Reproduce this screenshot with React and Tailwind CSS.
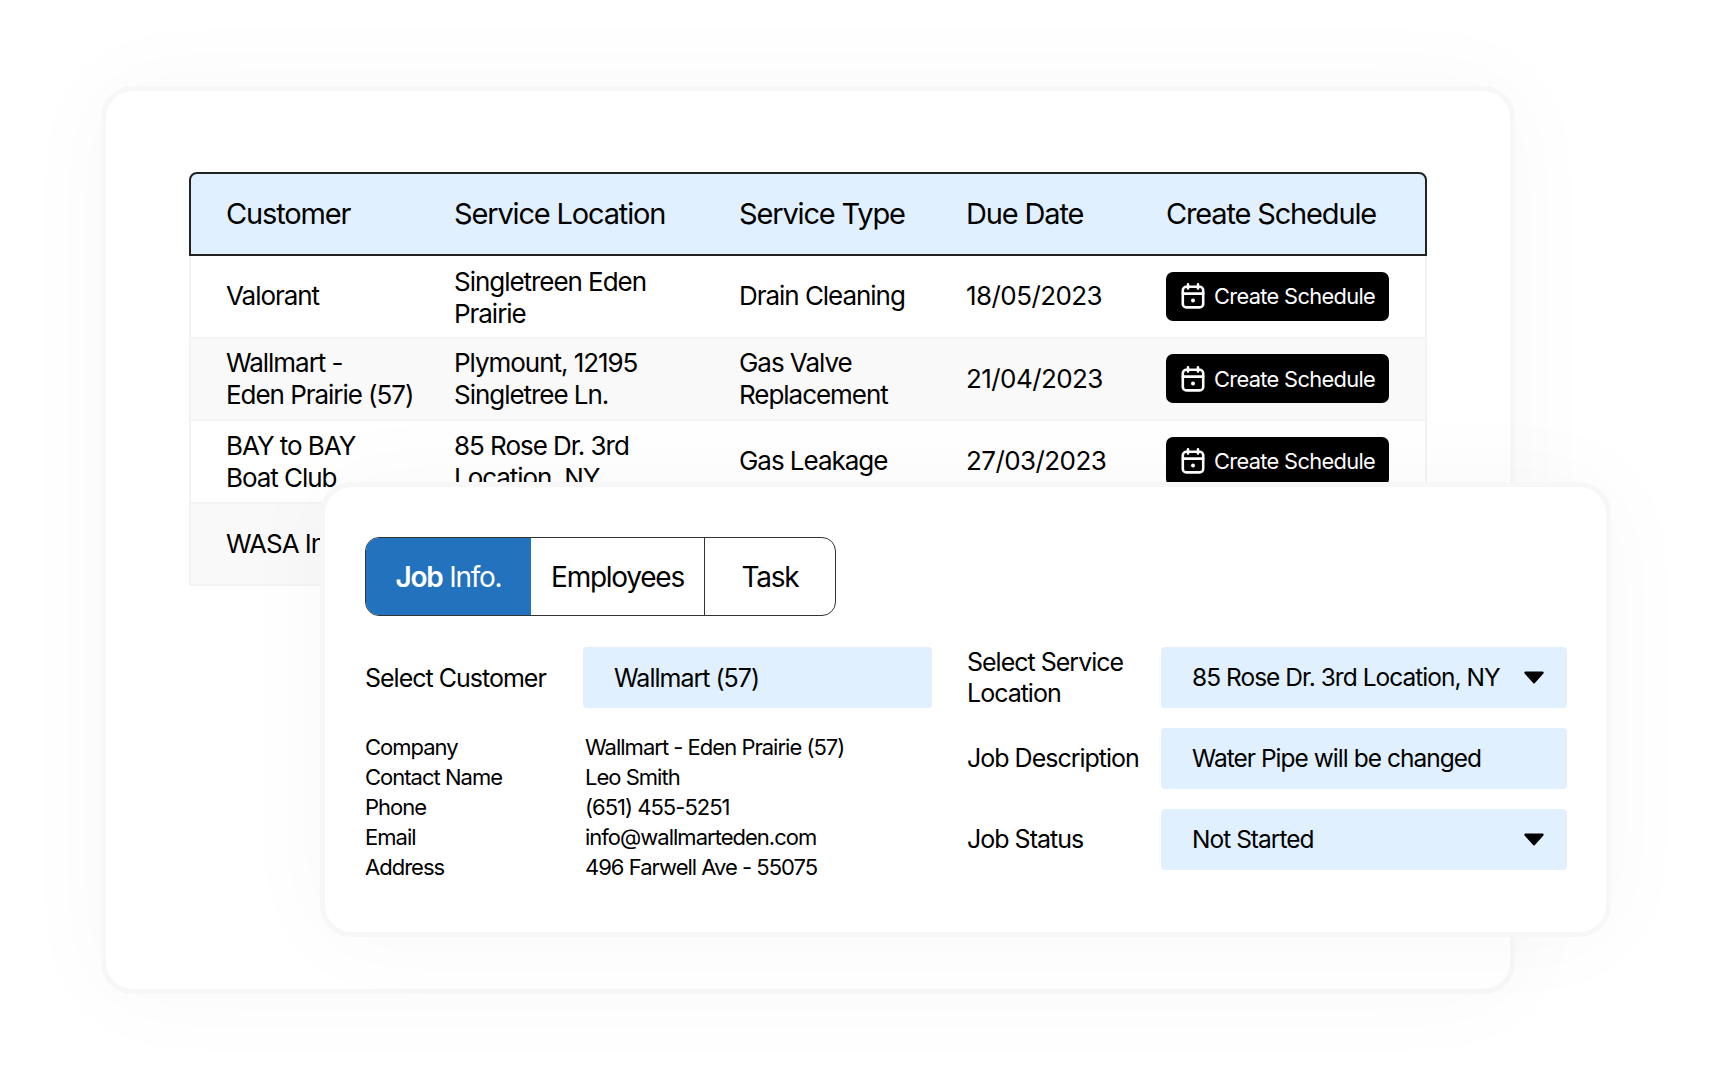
const rows = [
  { customer: ["Valorant"], location: ["Singletreen Eden", "Prairie"], type: ["Drain Cleaning"], due: "18/05/2023", shade: false, locationClass: "pt-[4px]" },
  { customer: ["Wallmart -", "Eden Prairie (57)"], location: ["Plymount, 12195", "Singletree Ln."], type: ["Gas Valve", "Replacement"], due: "21/04/2023", shade: true },
  { customer: ["BAY to BAY", "Boat Club"], location: ["85 Rose Dr. 3rd", "Location, NY"], type: ["Gas Leakage"], due: "27/03/2023", shade: false, customerClass: "pt-[2px]", locationClass: "pt-[2px]" },
  { customer: ["WASA Inc."], location: [], type: [], due: "", shade: true, noButton: true },
];

const details = [
  ["Company", "Wallmart - Eden Prairie (57)"],
  ["Contact Name", "Leo Smith"],
  ["Phone", "(651) 455-5251"],
  ["Email", "info@wallmarteden.com"],
  ["Address", "496 Farwell Ave - 55075"],
];

const CalendarIcon = () => (
  <svg width="24" height="26" viewBox="0 0 24 26" fill="none" stroke="white" strokeWidth="2.6" strokeLinecap="round">
    <rect x="1.8" y="3.8" width="20.4" height="20.6" rx="3.5" />
    <path d="M1.8 10.6h20.4M7 1.4v4M17 1.4v4" />
    <circle cx="12" cy="17.4" r="2" fill="white" stroke="none" />
  </svg>
);

const Caret = () => (
  <svg width="20" height="13" viewBox="0 0 20 13">
    <path d="M1.5 0.5h17a1.2 1.2 0 0 1 .9 2l-8.5 9.6a1.2 1.2 0 0 1-1.8 0L.6 2.5a1.2 1.2 0 0 1 .9-2z" fill="black" />
  </svg>
);

const Lines = ({ items, className = "" }) => (
  <div className={`flex flex-col ${className}`}>
    {items.map((t) => (
      <span key={t}>{t}</span>
    ))}
  </div>
);

const Field = ({ label, value, caret }) => (
  <div className="flex h-[61px] items-center">
    <div className="w-[194px] text-[25px] leading-[31px] tracking-[-0.04em]">{label}</div>
    <div className="flex h-[61px] w-[406px] items-center justify-between rounded-[4px] bg-[#e1f0ff] pl-[31px] pr-[23px] text-[24.5px] tracking-[-0.04em]">
      <span>{value}</span>
      {caret && <Caret />}
    </div>
  </div>
);

const App = () => {
  return (
    <div className="relative h-[1081px] w-[1712px] overflow-hidden bg-white font-['Inter',sans-serif] text-black">
      <div className="absolute left-[101px] top-[86px] h-[908px] w-[1414px] rounded-[32px] border-[5px] border-[#f7f7f7] bg-white pl-[83px] pt-[81px] shadow-[0_0_100px_rgba(0,0,0,0.03)]">
        <div className="w-[1238px]">
          <div className="grid h-[84px] grid-cols-[228px_285px_227px_200px_1fr] items-center rounded-t-[8px] border-2 border-[#222] bg-[#e1f0ff] pl-[35px] text-[29px] tracking-[-0.04em]">
            <div>Customer</div>
            <div>Service Location</div>
            <div>Service Type</div>
            <div>Due Date</div>
            <div>Create Schedule</div>
          </div>
          {rows.map((row) => (
            <div
              key={row.customer[0]}
              className={`grid h-[82.5px] grid-cols-[228px_285px_227px_200px_1fr] items-center border-x-2 border-b-2 border-[#f3f3f3] pl-[35px] text-[26px] leading-[32px] tracking-[-0.04em] ${row.shade ? "bg-[#f9f9f9]" : "bg-white"}`}
            >
              <Lines items={row.customer} className={row.customerClass} />
              <Lines items={row.location} className={row.locationClass} />
              <Lines items={row.type} />
              <div className="tracking-[-0.022em]">{row.due}</div>
              {!row.noButton && (
                <button className="flex h-[49px] w-[223px] items-center gap-[9px] rounded-[7px] bg-black pl-[15px] text-[21.8px] tracking-[-0.03em] text-white">
                  <CalendarIcon />
                  Create Schedule
                </button>
              )}
            </div>
          ))}
        </div>
      </div>

      <div className="absolute left-[320px] top-[482px] h-[455px] w-[1291px] rounded-[32px] border-[5px] border-[#f7f7f7] bg-white pl-[40px] pr-[39px] pt-[50px] shadow-[0_0_100px_rgba(0,0,0,0.03)]">
        <div className="flex h-[79px] w-[471px] overflow-hidden rounded-[14px] border border-[#333] text-[28px] tracking-[-0.045em]">
          <div className="flex w-[165px] items-center justify-center bg-[#2272bd] text-white">
            <span className="font-semibold">Job</span>&nbsp;Info.
          </div>
          <div className="flex w-[174px] items-center justify-center border-r border-[#333]">Employees</div>
          <div className="flex flex-1 items-center justify-center">Task</div>
        </div>

        <div className="mt-[31px] flex justify-between">
          <div className="w-[567px]">
            <div className="flex items-center">
              <div className="w-[218px] pt-[2px] text-[25px] tracking-[-0.04em]">Select Customer</div>
              <div className="flex h-[61px] w-[349px] items-center rounded-[4px] bg-[#e1f0ff] pl-[31px] pt-[2px] text-[25px] tracking-[-0.04em]">Wallmart (57)</div>
            </div>
            <div className="mt-[24px] text-[22px] leading-[30px] tracking-[-0.045em]">
              {details.map(([k, v]) => (
                <div key={k} className="flex">
                  <div className="w-[220px]">{k}</div>
                  <div>{v}</div>
                </div>
              ))}
            </div>
          </div>
          <div className="flex w-[600px] flex-col gap-[20px]">
            <Field label={<>Select Service<br />Location</>} value="85 Rose Dr. 3rd Location, NY" caret />
            <Field label="Job Description" value="Water Pipe will be changed" />
            <Field label="Job Status" value="Not Started" caret />
          </div>
        </div>
      </div>
    </div>
  );
};

export default App;
